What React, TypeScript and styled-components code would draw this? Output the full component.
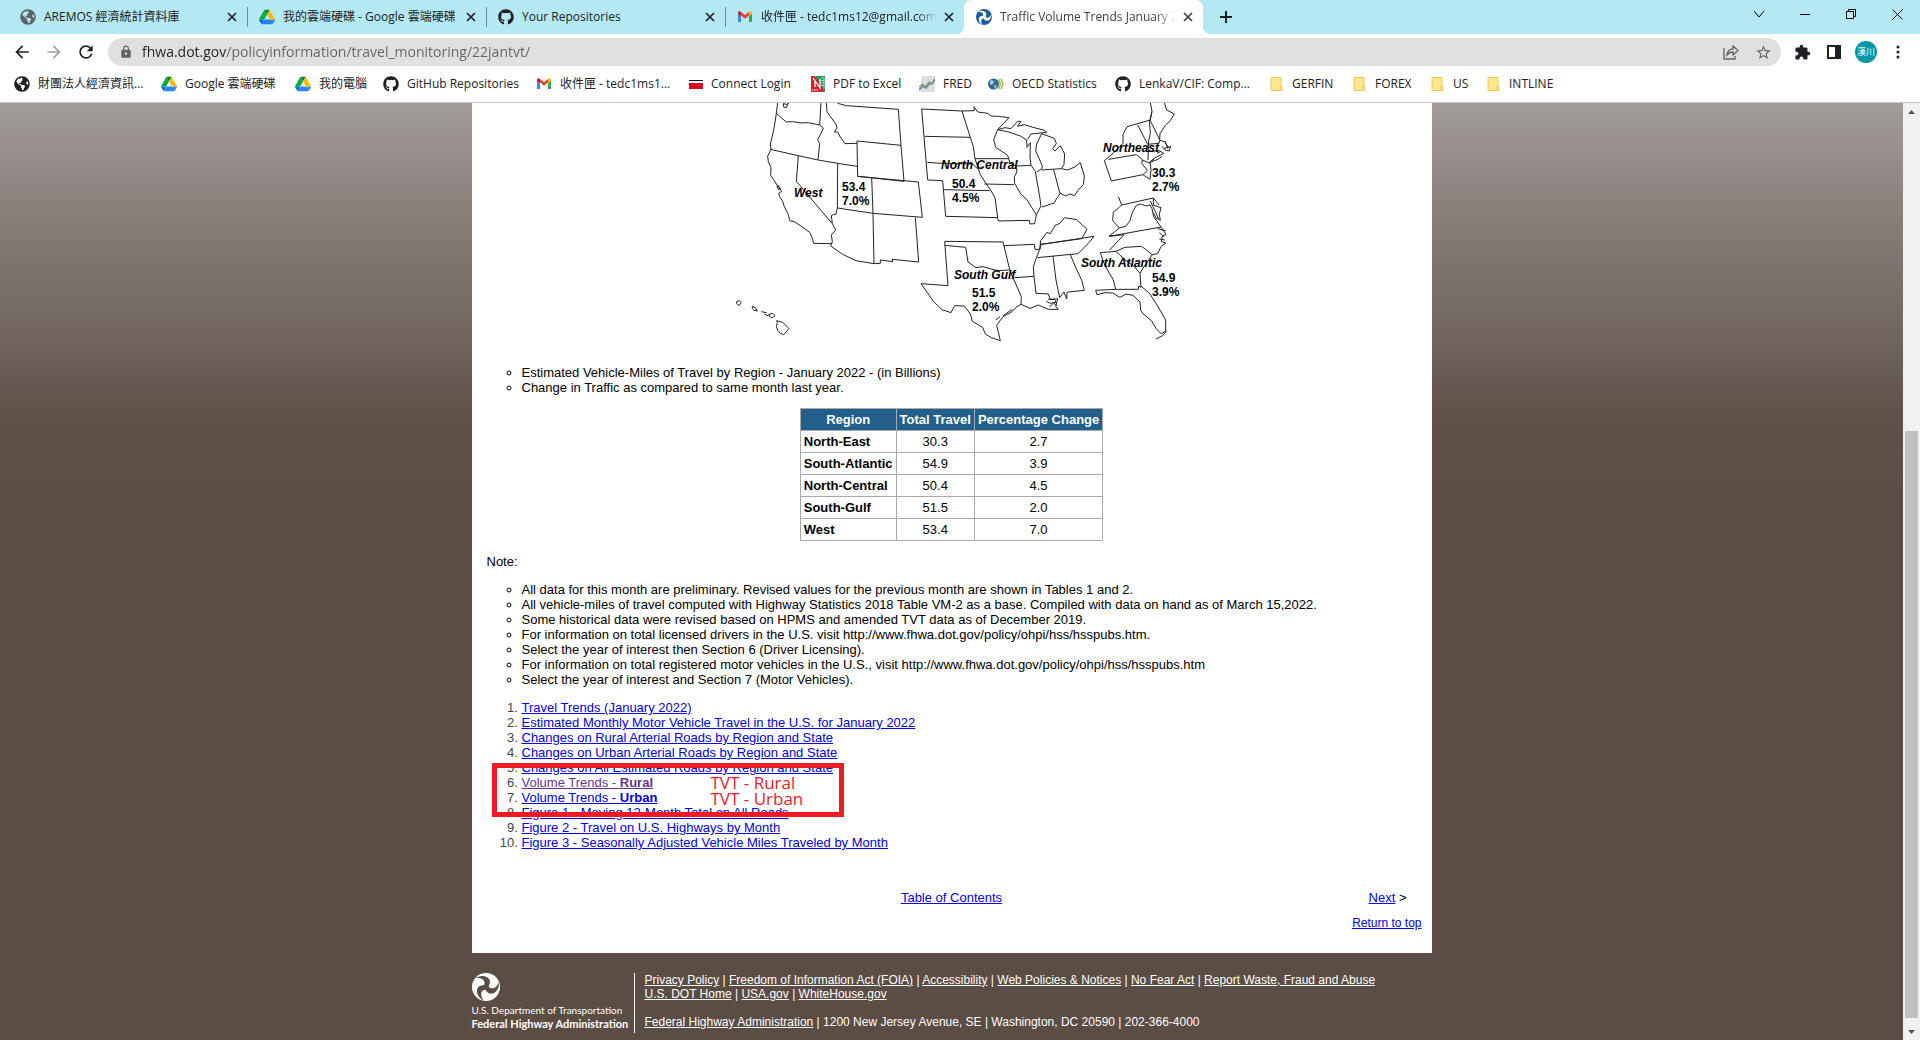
import React from 'react';
import styled, { createGlobalStyle } from 'styled-components';
import { FaGithub, FaGlobeAmericas } from 'react-icons/fa';
import { MdArrowBack, MdArrowForward, MdExtension, MdLock, MdRefresh, MdStarBorder } from 'react-icons/md';

const uiFont = `'Segoe UI', 'Open Sans', 'Noto Sans CJK TC', sans-serif`;
const pageFont = `Arial, 'Liberation Sans', sans-serif`;

const GlobalStyle = createGlobalStyle`
  * { box-sizing: border-box; }
  body { margin: 0; overflow: hidden; }
  button { border: 0; padding: 0; background: none; color: inherit; font: inherit; }
  svg { display: block; flex: none; }
`;

/* ---------- browser frame ---------- */

const Browser = styled.div`
  display: flex;
  flex-direction: column;
  height: 100vh;
  background: #fff;
  color: #202124;
  font: 12px/16px ${uiFont};
`;

const TabStrip = styled.div`
  display: flex;
  align-items: flex-start;
  height: 34px;
  padding-left: 8px;
  background: #b4e8f3;
`;

const Tab = styled.div<{ $active?: boolean; $divided?: boolean }>`
  position: relative;
  display: flex;
  align-items: center;
  gap: 8px;
  flex: 0 1 239px;
  min-width: 0;
  height: 34px;
  padding: 0 7px 0 12px;
  border-radius: 8px 8px 0 0;
  background: ${(p) => (p.$active ? '#fff' : 'transparent')};
  color: ${(p) => (p.$active ? '#3c4043' : '#202124')};

  &::before {
    content: '';
    display: ${(p) => (p.$divided ? 'block' : 'none')};
    position: absolute;
    left: 0;
    top: 7px;
    width: 1px;
    height: 20px;
    background: #6d8d94;
  }
`;

const TabCurve = styled.span<{ $side: 'left' | 'right' }>`
  position: absolute;
  bottom: 0;
  ${(p) => p.$side}: -8px;
  width: 8px;
  height: 8px;
  background: radial-gradient(circle at ${(p) => p.$side} top, transparent 8px, #fff 8px);
`;

const TabTitle = styled.span<{ $fade?: boolean }>`
  flex: 1;
  min-width: 0;
  margin-right: ${(p) => (p.$fade ? '-4px' : 0)};
  overflow: hidden;
  white-space: nowrap;
  ${(p) => p.$fade && 'mask-image: linear-gradient(to right, #000 calc(100% - 20px), transparent);'}
`;

const CloseTab = styled.button`
  display: grid;
  place-items: center;
  width: 16px;
  height: 16px;
`;

const NewTab = styled.button`
  display: grid;
  place-items: center;
  width: 28px;
  height: 34px;
  margin-left: 9px;
`;

const WindowControls = styled.div`
  display: flex;
  margin-left: auto;
`;

const WindowButton = styled.button`
  display: grid;
  place-items: center;
  width: 46px;
  height: 28px;
  color: #000;
`;

const Toolbar = styled.div`
  display: flex;
  align-items: center;
  height: 36px;
  padding: 0 6px;
`;

const ToolButton = styled.button<{ $dim?: boolean }>`
  display: grid;
  place-items: center;
  width: 32px;
  height: 32px;
  color: ${(p) => (p.$dim ? '#a0a2a4' : '#202124')};
`;

const Omnibox = styled.form`
  display: flex;
  align-items: center;
  flex: 1;
  height: 28px;
  margin: 0 5px 0 6px;
  padding: 0 2px 0 11px;
  border-radius: 14px;
  background: #e0e0e0;
  color: #5f6368;
`;

const AddressInput = styled.input`
  flex: 1;
  min-width: 0;
  margin-left: 9px;
  padding: 0;
  border: 0;
  outline: 0;
  color: #5f6368;
  font: 14px/20px ${uiFont};
  background: linear-gradient(to right, #202124 84px, #5f6368 84px);
  background-clip: text;
  -webkit-text-fill-color: transparent;
`;

const Avatar = styled.button`
  width: 22px;
  height: 22px;
  margin: 0 5px;
  border-radius: 50%;
  background: #0097a7;
  color: #fff;
  font-size: 9px;
  line-height: 22px;
`;

const BookmarkBar = styled.nav`
  display: flex;
  align-items: center;
  gap: 17px;
  height: 33px;
  padding: 0 14px 4px;
  border-bottom: 1px solid #c6c8ca;
`;

const Bookmark = styled.a`
  display: flex;
  align-items: center;
  gap: 8px;
  color: #202124;
  text-decoration: none;
  white-space: nowrap;
`;

const BookmarkLabel = styled.span<{ $width: number }>`
  width: ${(p) => p.$width}px;
`;

/* ---------- web page ---------- */

const Viewport = styled.div`
  display: flex;
  flex: 1;
  min-height: 0;
`;

const Page = styled.div`
  flex: 1;
  overflow: hidden;
  background: linear-gradient(
    #a29d98 0,
    #9a9390 34px,
    #857d77 120px,
    #70635f 240px,
    #615249 310px,
    #5b4c44 400px
  );
  color: #000;
  font: 13px/15px ${pageFont};
`;

const Content = styled.main`
  max-width: 960px;
  margin: 0 auto;
  padding: 0 15px 22px;
  background: #fff;
`;

const MapSvg = styled.svg`
  width: 480px;
  height: 247px;
  margin: 0 auto 15px;
  color: #222;
`;

const BulletList = styled.ul`
  margin: 13px 0;
  padding-left: 35px;
  list-style: circle;
`;

const DataTable = styled.table`
  margin: 0 auto;
  border-collapse: collapse;
  line-height: 15px;

  th, td {
    padding: 3px;
    border: 1px solid #a9a9a9;
    text-align: center;
  }
  thead th { background: #225f8a; color: #fff; }
  tbody th { text-align: left; }
`;

const Paragraph = styled.p`
  margin: 13px 0;
`;

const Annotated = styled.div`
  position: relative;
`;

const LinkList = styled.ol`
  margin: 0;
  padding-left: 35px;

  li::marker { color: #444; }
`;

const PageLink = styled.a<{ $visited?: boolean }>`
  color: ${(p) => (p.$visited ? '#663399' : '#0000ee')};
`;

const Callout = styled.div`
  position: absolute;
  left: 5px;
  top: 63px;
  width: 352px;
  height: 54px;
  padding: 7px 0 0 214px;
  border: 5px solid #ed1c24;
  color: #ed1c24;
  font: 17px/16px ${uiFont};
  white-space: nowrap;
`;

const PageNav = styled.nav`
  display: grid;
  grid-template-columns: 1fr auto 1fr;
  margin: 40px 10px 0;
`;

const NextCell = styled.span`
  text-align: right;
`;

const TopLinkRow = styled.p`
  margin: 11px -5px 0 0;
  font-size: 12px;
  text-align: right;
`;

const Footer = styled.footer`
  display: flex;
  max-width: 960px;
  margin: 20px auto 0;
  color: #fff;
  font-size: 12px;
  line-height: 14px;
`;

const Agency = styled.div`
  display: flex;
  flex-direction: column;
  width: 163px;
  height: 60px;
  border-right: 1px solid #fff;
  font-family: Lato, 'Open Sans', sans-serif;
  line-height: 14px;
  white-space: nowrap;
`;

const AgencyLine = styled.span<{ $strong?: boolean }>`
  margin-top: ${(p) => (p.$strong ? 0 : 2)}px;
  font-size: ${(p) => (p.$strong ? 11 : 10)}px;
  font-weight: ${(p) => (p.$strong ? 700 : 400)};
`;

const FooterLinks = styled.div`
  padding-left: 10px;
`;

const FooterLine = styled.p<{ $spaced?: boolean }>`
  margin: ${(p) => (p.$spaced ? 14 : 0)}px 0 0;
`;

const FooterLink = styled.a`
  color: #fff;
`;

const Scrollbar = styled.div`
  display: flex;
  flex-direction: column;
  align-items: center;
  width: 17px;
  background: #f1f1f1;
  color: #505050;
`;

const ScrollButton = styled.button`
  display: grid;
  place-items: center;
  width: 17px;
  height: 17px;
`;

const ScrollTrack = styled.div`
  display: flex;
  flex-direction: column;
  flex: 1;
  width: 13px;
`;

const ScrollSpace = styled.div<{ $grow: number }>`
  flex: ${(p) => p.$grow};
`;

const ScrollThumb = styled.div`
  flex: 587;
  background: #c1c1c1;
`;

/* ---------- icons ---------- */

const CrossIcon = () => (
  <svg width="10" height="10" viewBox="0 0 10 10" stroke="currentColor" strokeWidth="1.7"><path d="M1 1l8 8M9 1l-8 8" /></svg>
);

const DriveIcon = () => (
  <svg width="16" height="16" viewBox="0 0 87 78">
    <path d="M6.6 66.85l3.85 6.65c.8 1.4 1.95 2.5 3.3 3.3L27.5 53H0c0 1.55.4 3.1 1.2 4.5z" fill="#0066da" />
    <path d="M43.65 25L29.9 1.2c-1.35.8-2.5 1.9-3.3 3.3L1.2 48.5A9 9 0 000 53h27.5z" fill="#00ac47" />
    <path d="M73.55 76.8c1.35-.8 2.5-1.9 3.3-3.3l9.25-16c.8-1.4 1.2-2.95 1.2-4.5H59.8l5.85 11.5z" fill="#2684fc" />
    <path d="M43.65 25L57.4 1.2C56.05.4 54.5 0 52.9 0H34.4c-1.6 0-3.15.45-4.5 1.2z" fill="#00832d" />
    <path d="M59.8 53H27.5L13.75 76.8c1.35.8 2.9 1.2 4.5 1.2h50.8c1.6 0 3.15-.45 4.5-1.2z" fill="#2684fc" />
    <path d="M73.4 26.5L60.7 4.5c-.8-1.4-1.95-2.5-3.3-3.3L43.65 25 59.8 53h27.45c0-1.55-.4-3.1-1.2-4.5z" fill="#ffba00" />
  </svg>
);

const GmailIcon = () => (
  <svg width="16" height="16" viewBox="-1 0 16 16">
    <path d="M0 4v9h3V6.500z" fill="#4285f4" />
    <path d="M14 4v9h-3V6.500z" fill="#34a853" />
    <path d="M3 6V3L7 6l4-3v3.500L7 9.800 3 6.600z" fill="#ea4335" />
    <path d="M0 4c0-1.800 1.800-2.200 3-1v4L0 5z" fill="#c5221f" />
    <path d="M14 4c0-1.800-1.800-2.200-3-1v4l3-2z" fill="#fbbc04" />
  </svg>
);

const blade = 'M-11 -8.500C-6 -13 4 -11.500 4 -5C4 -2 2 0 0 1.500L-3 -.500C-1 -3 -1 -5 -2.500 -6.800C-4.500 -9 -8 -9.300 -11 -8.500Z';

const DotLogo = ({ size, disc, arms }: { size: number; disc: string; arms: string }) => (
  <svg width={size} height={size} viewBox="-14 -14 28 28">
    <circle r="14" fill={disc} />
    {[0, 120, 240].map((angle) => (
      <path key={angle} d={blade} fill={arms} transform={`rotate(${angle})`} />
    ))}
  </svg>
);

const FlagIcon = () => (
  <svg width="14" height="16" viewBox="0 0 14 16"><path fill="#111" d="M0 4h14v1H0z" /><path fill="#d80027" d="M0 7h14v6H0z" /></svg>
);

const PdfIcon = () => (
  <svg width="14" height="16" viewBox="0 0 14 16">
    <path fill="#1d9a55" d="M5 0h9v16H5z" />
    <path fill="#d9202e" d="M0 0h4l8 12v4H0z" />
    <path d="M2 2l7 10V3M4 5v6" fill="none" stroke="#fff" strokeWidth="1.300" />
    <path d="M10 2h3v11M10 4.500h3M10 7h3M10 9.500h3" fill="none" stroke="#c5ead5" strokeWidth=".8" />
    <path d="M1 14h6" stroke="#fff" strokeDasharray="1.500 .7" />
  </svg>
);

const FredIcon = () => (
  <svg width="16" height="16" viewBox="0 0 16 16">
    <path fill="#dedede" d="M3 0h13v16H0z" />
    <path d="M0 14l4-4 3 2 4-5 2 1 3-5" fill="none" stroke="#5d87a8" strokeWidth="1.600" />
    <path d="M0 11l4-3 2 3 4-5 3 2 3-4" fill="none" stroke="#819a6b" strokeWidth="1.200" />
  </svg>
);

const OecdIcon = () => (
  <svg width="16" height="16" viewBox="0 0 16 16">
    <circle cx="5.500" cy="8" r="5.500" fill="#2f6a96" />
    <path d="M2 4l4 1-1 3-3 1zM6 9l3 1-2 3z" fill="#a9cbe0" />
    <path d="M10.500 3l2 5-2 5M13 3l2 5-2 5" fill="none" stroke="#9aba3c" strokeWidth="1.400" />
  </svg>
);

const FolderIcon = () => (
  <svg width="14" height="16" viewBox="0 0 14 16">
    <path d="M1 1.500h10v13H1z" fill="#ffe694" stroke="#ecca4f" />
    <path d="M10 10.500h2v4h-2z" fill="#ffe694" stroke="#ecca4f" />
  </svg>
);

/* ---------- data ---------- */

const tabs = [
  { title: 'AREMOS 經濟統計資料庫', icon: <FaGlobeAmericas size={16} color="#5f6368" /> },
  { title: '我的雲端硬碟 - Google 雲端硬碟', icon: <DriveIcon />, divided: true },
  { title: 'Your Repositories', icon: <FaGithub size={16} />, divided: true },
  { title: '收件匣 - tedc1ms12@gmail.com', icon: <GmailIcon />, divided: true, fade: true },
  { title: 'Traffic Volume Trends January 2022', icon: <DotLogo size={16} disc="#1f5a9e" arms="#fff" />, active: true, fade: true },
];

const bookmarks = [
  { label: '財團法人經濟資訊...', icon: <FaGlobeAmericas size={16} />, width: 106 },
  { label: 'Google 雲端硬碟', icon: <DriveIcon />, width: 93 },
  { label: '我的電腦', icon: <DriveIcon />, width: 47 },
  { label: 'GitHub Repositories', icon: <FaGithub size={16} />, width: 112 },
  { label: '收件匣 - tedc1ms1...', icon: <GmailIcon />, width: 112 },
  { label: 'Connect Login', icon: <FlagIcon />, width: 83 },
  { label: 'PDF to Excel', icon: <PdfIcon />, width: 69 },
  { label: 'FRED', icon: <FredIcon />, width: 28 },
  { label: 'OECD Statistics', icon: <OecdIcon />, width: 86 },
  { label: 'LenkaV/CIF: Comp...', icon: <FaGithub size={16} />, width: 114 },
  { label: 'GERFIN', icon: <FolderIcon />, width: 44 },
  { label: 'FOREX', icon: <FolderIcon />, width: 39 },
  { label: 'US', icon: <FolderIcon />, width: 17 },
  { label: 'INTLINE', icon: <FolderIcon />, width: 48 },
];

const regions = [
  ['North-East', '30.3', '2.7'],
  ['South-Atlantic', '54.9', '3.9'],
  ['North-Central', '50.4', '4.5'],
  ['South-Gulf', '51.5', '2.0'],
  ['West', '53.4', '7.0'],
];

const notes = [
  'All data for this month are preliminary. Revised values for the previous month are shown in Tables 1 and 2.',
  'All vehicle-miles of travel computed with Highway Statistics 2018 Table VM-2 as a base. Compiled with data on hand as of March 15,2022.',
  'Some historical data were revised based on HPMS and amended TVT data as of December 2019.',
  'For information on total licensed drivers in the U.S. visit http://www.fhwa.dot.gov/policy/ohpi/hss/hsspubs.htm.',
  'Select the year of interest then Section 6 (Driver Licensing).',
  'For information on total registered motor vehicles in the U.S., visit http://www.fhwa.dot.gov/policy/ohpi/hss/hsspubs.htm',
  'Select the year of interest and Section 7 (Motor Vehicles).',
];

const links: { text: string; strong?: string; visited?: boolean }[] = [
  { text: 'Travel Trends (January 2022)' },
  { text: 'Estimated Monthly Motor Vehicle Travel in the U.S. for January 2022' },
  { text: 'Changes on Rural Arterial Roads by Region and State' },
  { text: 'Changes on Urban Arterial Roads by Region and State' },
  { text: 'Changes on All Estimated Roads by Region and State' },
  { text: 'Volume Trends - ', strong: 'Rural', visited: true },
  { text: 'Volume Trends - ', strong: 'Urban' },
  { text: 'Figure 1 - Moving 12-Month Total on All Roads' },
  { text: 'Figure 2 - Travel on U.S. Highways by Month' },
  { text: 'Figure 3 - Seasonally Adjusted Vehicle Miles Traveled by Month' },
];

const policyLinks = [
  ['Privacy Policy', 'Freedom of Information Act (FOIA)', 'Accessibility', 'Web Policies & Notices', 'No Fear Act', 'Report Waste, Fraud and Abuse'],
  ['U.S. DOT Home', 'USA.gov', 'WhiteHouse.gov'],
];

/* ---------- map ---------- */

const west = [
  'M170 8L166 40L172 45L185 57L196 66L215 65L240 69L262 68L296 75L297 60L300 8',
  'M187 10l10 4 5-5-6 14-8-2zM166 40L160 80L153 112L148 132L150 148L140 168L142 185L150 202L149 226L157 238L170 258L182 274L173 280L176 290L185 304L190 320L202 344L206 362L222 366L245 382L266 397L273 412L278 430L334 431',
  'M170 255l8 10-4 5-6-9zM148 148L232 167L291 180L350 190L408 199M296 75L307 84L302 96L290 119L296 130L291 180M232 167L226 244L334 371L331 346L345 342L349 324L350 190',
  'M316 8L318 34L325 46L345 72L348 84L340 96L350 96L357 110L372 131L408 130M350 10L376 17L532 28L540 136L408 123L410 229L549 244L540 136',
  'M410 229L452 233L456 340L349 324M452 233L592 246L604 352L456 340L459 491L405 482L365 463L329 438L334 425L331 405L344 390L334 371',
  'M583 352L593 486L513 478L516 485L478 480L478 490L459 491M47 605l8-3 6 6-7 9-7-6zM94 619l9 4 6 10-10-2-5-6zM121 635l16 3M130 641l8 6 7-3M146 642l9-2 7 7-9 7-8-5zM167 662L185 667L204 686L188 704L178 700L170 691L166 680L169 668Z',
];

const central = [
  'M32 27L50 240L95 242L104 349L260 353L252 293L240 272L226 252L208 224L192 176L187 140L178 112L153 33Z',
  'M41 109L178 112M49 187L75 189L90 190L185 192L200 207M98 269L236 272M192 176L292 176M220 252L309 254',
  'M153 33L190 32L189 20L200 36L230 40L240 48L262 49L294 53L260 89L256 99L248 120L254 142L290 166L297 190L315 198L318 216L310 230L311 250L330 283L348 299L362 322L376 345L371 371L357 372L355 361L262 363L260 353',
  'M260 89L290 95L328 108L347 120L348 142L358 128L357 172L360 196L318 198M260 89L282 83L300 86L320 64L330 64L319 79L340 74L366 82L401 91L407 97L360 102L350 118M360 196L373 214L386 290L390 318L376 345',
  'M392 101L377 132L374 153L385 177L394 198L392 207L377 216M392 101L430 115L436 130L425 146L432 153L448 137L461 162L459 193L451 206L392 210M428 209L447 281L436 297L430 309L393 321M451 206L470 210L489 202L508 188L520 228L517 254L501 271L490 287L477 282L464 288L447 279',
  'M101 424L276 426L297 512L306 533L331 590L330 613L318 620L300 637L276 650L257 676L262 697L268 722L241 713L223 702L215 682L184 664L178 642L160 618L131 617L120 638L93 629L68 605L30 551L111 557L101 424M101 436L164 442L171 486L195 503L216 500L240 507L263 512L294 510',
  'M279 437L370 433L372 448L387 448L390 433M310 533L369 529L367 500L374 479L386 448L389 422L408 397L418 401L432 377L448 369L460 353L497 359L528 388L512 416L389 433M387 434L549 409L535 427L501 461L379 473M369 529L375 580L412 582L418 599L440 596L434 620L442 628L412 628L382 615L357 625L330 613',
  'M426 468L435 540L446 593M446 593L459 576L467 597L468 578L472 576L520 571L512 540L496 507L478 464M406 604L418 610L435 607L430 597L411 598M415 621L428 609L438 617M267 650L255 660M276 647L304 628',
];

const east = [
  'M298 8L303 34L298 60L228 80L216 104L216 130L187 159L160 182L181 243L276 224L289 211L272 190L274 178L256 164L172 178',
  'M303 34L297 60L327 121L324 130L290 133L260 75M295 60L298 100L293 123L291 180M340 8L347 30L370 42L358 62L344 75L327 101L326 121L343 125L350 145L359 138L355 153L342 150L333 139M290 155L325 152L338 160L310 175L295 188L321 178L333 169M274 180L298 190L300 210L297 238L276 224M297 186L310 177M341 127L352 141L340 145M318 160L330 154',
  'M202 290L212 315L205 322L187 336L185 362L205 384L224 379L237 363L243 340L256 316L269 312L285 318L297 315L303 326L308 350L330 381L174 409M212 315L307 294L307 315L330 323L325 343L328 361L315 354L307 338M307 294L324 315M298 303L312 333L323 357M205 384L174 409L219 404L176 450M330 381L345 403L334 408L331 425L344 429L330 440L320 461L304 464M320 386L344 392M325 398L338 410M325 417L341 420',
  'M148 458L195 454L222 442L272 439L304 464L279 500L267 520L270 562L263 558L262 568L194 568L134 571L138 584L162 578L185 579L207 592L225 582L246 586L267 606L269 630L276 641L302 663L315 685L330 701L344 694L344 660L320 618L297 582L270 558M148 458L162 497L187 540L194 568M195 454L213 471L225 482L250 500L266 519M315 717L335 707L347 692',
];

const mapLabels = [
  { x: 73, y: 97, text: 'West' },
  { x: 220, y: 69, text: 'North Central' },
  { x: 233, y: 179, text: 'South Gulf' },
  { x: 382, y: 52, text: 'Northeast' },
  { x: 360, y: 167, text: 'South Atlantic' },
];

const mapValues = [
  { x: 121, y: 91, volume: '53.4', change: '7.0%' },
  { x: 231, y: 88, volume: '50.4', change: '4.5%' },
  { x: 251, y: 197, volume: '51.5', change: '2.0%' },
  { x: 431, y: 77, volume: '30.3', change: '2.7%' },
  { x: 431, y: 182, volume: '54.9', change: '3.9%' },
];

const RegionMap = () => (
  <MapSvg viewBox="-9 3 480 247" role="img" aria-label="Map of vehicle-miles of travel by region">
    {[west, central, east].map((shapes, i) => (
      <g key={i} transform={`translate(${[0, 190, 330][i]} 0) scale(.33333)`} fill="none" stroke="currentColor" strokeWidth="3">
        {shapes.map((d) => <path key={d} d={d} />)}
      </g>
    ))}
    <g fontSize="12" fontWeight="700" fill="#000">
      {mapLabels.map((l) => <text key={l.text} x={l.x} y={l.y} fontStyle="italic">{l.text}</text>)}
      {mapValues.map((v) => (
        <React.Fragment key={v.volume}>
          <text x={v.x} y={v.y}>{v.volume}</text>
          <text x={v.x} y={v.y + 14}>{v.change}</text>
        </React.Fragment>
      ))}
    </g>
  </MapSvg>
);

/* ---------- app ---------- */

export default function App() {
  return (
    <Browser>
      <GlobalStyle />
      <TabStrip>
        {tabs.map((t) => (
          <Tab key={t.title} $active={t.active} $divided={t.divided}>
            {t.active && <><TabCurve $side="left" /><TabCurve $side="right" /></>}
            {t.icon}
            <TabTitle $fade={t.fade}>{t.title}</TabTitle>
            <CloseTab aria-label="Close tab"><CrossIcon /></CloseTab>
          </Tab>
        ))}
        <NewTab aria-label="New tab">
          <svg width="12" height="12" viewBox="0 0 12 12" stroke="currentColor" strokeWidth="2"><path d="M6 0v12M0 6h12" /></svg>
        </NewTab>
        <WindowControls>
          <WindowButton aria-label="Search tabs">
            <svg width="12" height="12" viewBox="0 0 12 12" fill="none" stroke="currentColor"><path d="M1 3l5 6 5-6" /></svg>
          </WindowButton>
          <WindowButton aria-label="Minimize">
            <svg width="10" height="10" viewBox="0 0 10 10" stroke="currentColor"><path d="M0 5.500h10" /></svg>
          </WindowButton>
          <WindowButton aria-label="Restore">
            <svg width="10" height="10" viewBox="0 0 10 10" fill="none" stroke="currentColor"><path d="M.5 2.500h7v7h-7zM2.500 2.500v-2h7v7h-2" /></svg>
          </WindowButton>
          <WindowButton aria-label="Close">
            <svg width="11" height="11" viewBox="0 0 11 11" stroke="currentColor"><path d="M.5.5l10 10M10.500.5l-10 10" /></svg>
          </WindowButton>
        </WindowControls>
      </TabStrip>

      <Toolbar>
        <ToolButton aria-label="Back"><MdArrowBack size={20} /></ToolButton>
        <ToolButton aria-label="Forward" $dim><MdArrowForward size={20} /></ToolButton>
        <ToolButton aria-label="Reload"><MdRefresh size={20} /></ToolButton>
        <Omnibox>
          <MdLock size={14} />
          <AddressInput aria-label="Address" defaultValue="fhwa.dot.gov/policyinformation/travel_monitoring/22jantvt/" />
          <ToolButton type="button" aria-label="Share">
            <svg width="16" height="16" viewBox="0 0 16 16" fill="none" stroke="#5f6368" strokeWidth="1.300">
              <path d="M1 4v11h11v-3M4 11c.5-4 3-6 6-6V2l5 4.500L10 11V8c-3 0-4.500 1-6 3z" />
            </svg>
          </ToolButton>
          <ToolButton type="button" aria-label="Bookmark this page"><MdStarBorder size={17} color="#5f6368" /></ToolButton>
        </Omnibox>
        <ToolButton aria-label="Extensions"><MdExtension size={17} /></ToolButton>
        <ToolButton aria-label="Side panel">
          <svg width="14" height="14" viewBox="0 0 14 14"><path fill="currentColor" fillRule="evenodd" d="M0 0h14v14H0zM2 2v10h6V2z" /></svg>
        </ToolButton>
        <Avatar aria-label="Profile">漢川</Avatar>
        <ToolButton aria-label="Menu">
          <svg width="4" height="14" viewBox="0 0 4 14" fill="currentColor"><circle cx="2" cy="2" r="1.500" /><circle cx="2" cy="7" r="1.500" /><circle cx="2" cy="12" r="1.500" /></svg>
        </ToolButton>
      </Toolbar>

      <BookmarkBar>
        {bookmarks.map((b) => (
          <Bookmark key={b.label} href="#">{b.icon}<BookmarkLabel $width={b.width}>{b.label}</BookmarkLabel></Bookmark>
        ))}
      </BookmarkBar>

      <Viewport>
        <Page>
          <Content>
            <RegionMap />
            <BulletList>
              <li>Estimated Vehicle-Miles of Travel by Region - January 2022 - (in Billions)</li>
              <li>Change in Traffic as compared to same month last year.</li>
            </BulletList>
            <DataTable>
              <thead>
                <tr><th scope="col">Region</th><th scope="col">Total Travel</th><th scope="col">Percentage Change</th></tr>
              </thead>
              <tbody>
                {regions.map(([name, travel, change]) => (
                  <tr key={name}><th scope="row">{name}</th><td>{travel}</td><td>{change}</td></tr>
                ))}
              </tbody>
            </DataTable>
            <Paragraph>Note:</Paragraph>
            <BulletList>
              {notes.map((n) => <li key={n}>{n}</li>)}
            </BulletList>
            <Annotated>
              <LinkList>
                {links.map((l) => (
                  <li key={l.text + l.strong}>
                    <PageLink href="#" $visited={l.visited}>{l.text}{l.strong && <strong>{l.strong}</strong>}</PageLink>
                  </li>
                ))}
              </LinkList>
              <Callout>
                <div>TVT - Rural</div>
                <div>TVT - Urban</div>
              </Callout>
            </Annotated>
            <PageNav>
              <span />
              <PageLink href="#">Table of Contents</PageLink>
              <NextCell><PageLink href="#">Next</PageLink> &gt;</NextCell>
            </PageNav>
            <TopLinkRow><PageLink href="#">Return to top</PageLink></TopLinkRow>
          </Content>
          <Footer>
            <Agency>
              <DotLogo size={28} disc="#fff" arms="#5b4c44" />
              <AgencyLine>U.S. Department of Transportation</AgencyLine>
              <AgencyLine $strong>Federal Highway Administration</AgencyLine>
            </Agency>
            <FooterLinks>
              {policyLinks.map((line) => (
                <FooterLine key={line[0]}>
                  {line.map((name, i) => (
                    <React.Fragment key={name}>{i > 0 && ' | '}<FooterLink href="#">{name}</FooterLink></React.Fragment>
                  ))}
                </FooterLine>
              ))}
              <FooterLine $spaced>
                <FooterLink href="#">Federal Highway Administration</FooterLink> | 1200 New Jersey Avenue, SE | Washington, DC 20590 | 202-366-4000
              </FooterLine>
            </FooterLinks>
          </Footer>
        </Page>
        <Scrollbar>
          <ScrollButton aria-label="Scroll up"><svg width="7" height="4" viewBox="0 0 7 4"><path d="M0 4h7L3.500 0z" fill="currentColor" /></svg></ScrollButton>
          <ScrollTrack><ScrollSpace $grow={311} /><ScrollThumb /><ScrollSpace $grow={5} /></ScrollTrack>
          <ScrollButton aria-label="Scroll down"><svg width="7" height="4" viewBox="0 0 7 4"><path d="M0 0h7L3.500 4z" fill="currentColor" /></svg></ScrollButton>
        </Scrollbar>
      </Viewport>
    </Browser>
  );
}
